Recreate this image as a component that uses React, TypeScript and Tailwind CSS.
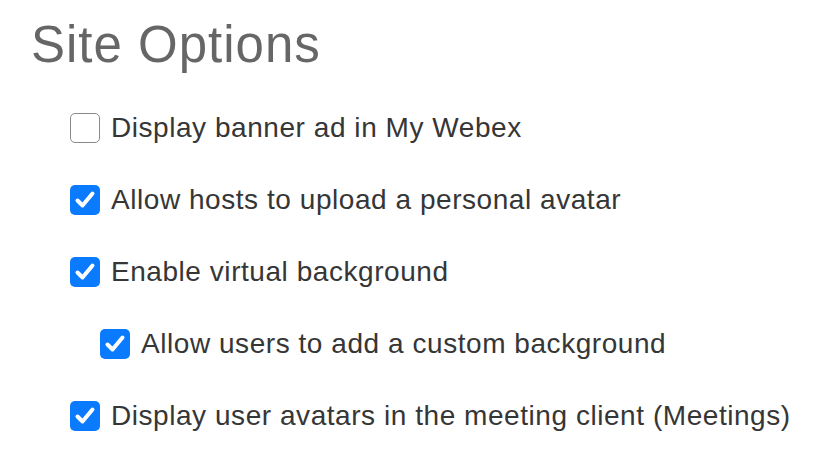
import React, { useState } from "react";

const OPTIONS = [
  { id: "banner", label: "Display banner ad in My Webex", checked: false, indent: false },
  { id: "avatar", label: "Allow hosts to upload a personal avatar", checked: true, indent: false },
  { id: "virtual", label: "Enable virtual background", checked: true, indent: false },
  { id: "custom", label: "Allow users to add a custom background", checked: true, indent: true },
  { id: "client", label: "Display user avatars in the meeting client (Meetings)", checked: true, indent: false },
];

function Box({ checked }: { checked: boolean }) {
  if (!checked) {
    return <span className="w-[30px] h-[30px] rounded-[5px] border border-[#8a8a8a] bg-white shrink-0" />;
  }
  return (
    <span className="w-[30px] h-[30px] rounded-[5px] bg-[#0a7aff] shrink-0 flex items-center justify-center">
      <svg width="22" height="22" viewBox="0 0 22 22" fill="none">
        <path d="M3.5 11.5 L8.5 16.5 L18.5 4.5" stroke="white" strokeWidth="4" strokeLinecap="round" strokeLinejoin="round" />
      </svg>
    </span>
  );
}

export default function App() {
  const [values, setValues] = useState<Record<string, boolean>>(
    Object.fromEntries(OPTIONS.map((o) => [o.id, o.checked]))
  );

  return (
    <div className="w-[816px] h-[466px] bg-white font-['Liberation_Sans',Arial,sans-serif] overflow-hidden">
      <h1 className="pl-[31px] pt-[15px] text-[51px] leading-[60px] tracking-[1px] text-[#666666] font-normal">Site Options</h1>
      <div className="mt-[38px] flex flex-col gap-[42px]">
        {OPTIONS.map((o) => (
          <label
            key={o.id}
            onClick={() => setValues((v) => ({ ...v, [o.id]: !v[o.id] }))}
            className={`flex items-center gap-[11px] h-[30px] cursor-pointer ${o.indent ? "pl-[100px]" : "pl-[70px]"}`}
          >
            <Box checked={values[o.id]} />
            <span className="text-[28px] tracking-[0.55px] text-[#363636] whitespace-nowrap">{o.label}</span>
          </label>
        ))}
      </div>
    </div>
  );
}
